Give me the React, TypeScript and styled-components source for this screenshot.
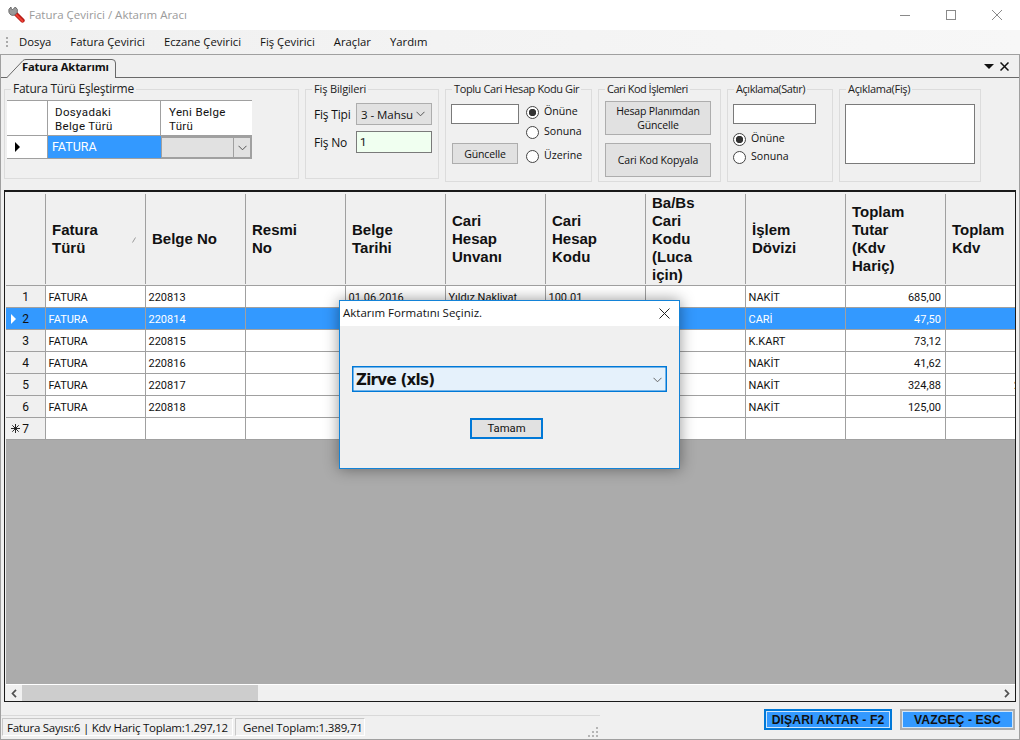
import React from "react";
import styled, { createGlobalStyle } from "styled-components";

const Global = createGlobalStyle`
  html, body { margin: 0; padding: 0; background: #f0f0f0; }
  #root { width: 1020px; height: 740px; overflow: hidden; }
  * { box-sizing: border-box; }
`;

const ui = `"Open Sans", "Liberation Sans", sans-serif`;
const cellFont = `Roboto, "Liberation Sans", sans-serif`;
const heavy = `"Liberation Sans", Arial, sans-serif`;

const Shell = styled.div`
  position: relative;
  width: 1020px;
  height: 740px;
  display: flex;
  flex-direction: column;
  background: #f0f0f0;
  color: #111;
  font: 12px ${ui};
`;

const TitleBar = styled.header`
  height: 30px;
  background: #fff;
  display: flex;
  align-items: center;
  padding-left: 8px;
  gap: 4px;
`;
const TitleText = styled.span`
  color: #9b9b9b;
  font: 11.5px/14px ${ui};
`;
const WindowButtons = styled.div`
  margin-left: auto;
  display: flex;
  height: 30px;
`;
const WindowButton = styled.div`
  width: 46px;
  display: flex;
  align-items: center;
  justify-content: center;
`;

const MenuBar = styled.nav`
  height: 24px;
  background: linear-gradient(90deg, #f0f0f0, #f7f7f7);
  display: flex;
  align-items: center;
  padding-left: 6px;
`;
const Grip = styled.span`
  width: 2px;
  height: 11px;
  margin-right: 11px;
  background: repeating-linear-gradient(180deg, #aaa 0 2px, transparent 2px 4px);
`;
const MenuItem = styled.span`
  margin-right: 19px;
  font: 11.3px/14px ${ui};
  color: #111;
`;

const Frame = styled.div`
  flex: 1;
  min-height: 0;
  border: 1px solid #a0a0a0;
  display: flex;
  flex-direction: column;
`;
const TabStrip = styled.div`
  height: 23px;
  flex: none;
  border-bottom: 1px solid #696969;
  display: flex;
  align-items: flex-end;
  padding-left: 5px;
`;
const Tab = styled.div`
  position: relative;
  width: 110px;
  height: 20px;
  margin-bottom: -1px;
  padding-left: 16px;
  font: bold 11.2px/18px ${ui};
  letter-spacing: -0.15px;
  color: #111;
  svg { position: absolute; left: 0; top: 0; z-index: 0; }
  span { position: relative; z-index: 1; }
`;
const StripIcons = styled.div`
  margin-left: auto;
  display: flex;
  align-items: center;
  gap: 6px;
  padding-right: 10px;
  height: 22px;
`;

const Groups = styled.section`
  display: flex;
  align-items: flex-start;
  gap: 6px;
  padding: 4px 0 0 3px;
  height: 112px;
  flex: none;
`;
const Group = styled.fieldset<{ $w: number; $h: number }>`
  width: ${(p) => p.$w}px;
  height: ${(p) => p.$h}px;
  min-width: 0;
  margin: 0;
  padding: 0;
  border: 1px solid #dcdcdc;
  flex: none;
`;
const Legend = styled.legend<{ $size?: number; $track?: number }>`
  margin-left: 6px;
  padding: 0 2px;
  height: 14px;
  font: ${(p) => p.$size ?? 11}px/14px ${ui};
  letter-spacing: ${(p) => p.$track ?? -0.4}px;
  color: #222;
  white-space: nowrap;
`;

const MiniGrid = styled.div`
  margin: 4px 0 0 2px;
  width: 245px;
  display: grid;
  grid-template-columns: 41px 113px 91px;
  grid-template-rows: 35px 23px;
  background: #fff;
  border-top: 1px solid #a0a0a0;
`;
const MiniHead = styled.div<{ $last?: boolean }>`
  border-right: ${(p) => (p.$last ? "none" : "1px solid #a0a0a0")};
  border-bottom: 1px solid #a0a0a0;
  padding: 4px 0 0 ${(p) => (p.$last ? 8 : 7)}px;
  font: 11.5px/14px ${cellFont};
  letter-spacing: 0.35px;
`;
const MiniRowHead = styled.div`
  display: flex;
  align-items: center;
  padding-left: 8px;
  border-right: 1px solid #a0a0a0;
  border-bottom: 1px solid #a0a0a0;
`;
const MiniValue = styled.div`
  background: #3399ff;
  color: #fff;
  padding-left: 4px;
  border-bottom: 1px solid #a0a0a0;
  font: 12.5px/22px ${cellFont};
`;
const MiniCombo = styled.div`
  background: #e1e1e1;
  border: 2px solid #a0a0a0;
  border-left-width: 1px;
  display: flex;
  justify-content: flex-end;
`;
const MiniArrow = styled.div`
  width: 17px;
  border-left: 1px solid #a0a0a0;
  display: flex;
  align-items: center;
  justify-content: center;
`;

const FisGrid = styled.div`
  display: grid;
  grid-template-columns: 42px 76px;
  grid-auto-rows: 22px;
  row-gap: 6px;
  align-items: center;
  margin: 7px 0 0 8px;
`;
const Label = styled.span`
  font: 12px ${ui};
  letter-spacing: -0.2px;
`;
const SelectBox = styled.div`
  height: 22px;
  background: #e1e1e1;
  border: 1px solid #adadad;
  display: flex;
  align-items: center;
  justify-content: space-between;
  padding: 0 6px 0 4px;
  font: 11.5px ${ui};
  letter-spacing: -0.05px;
`;
const Input = styled.div<{ $w: number; $h: number; $bg?: string }>`
  width: ${(p) => p.$w}px;
  height: ${(p) => p.$h}px;
  background: ${(p) => p.$bg ?? "#fff"};
  border: 1px solid #7a7a7a;
  padding-left: 3px;
  font: 11.5px/20px ${cellFont};
`;
const TopluBody = styled.div`
  display: flex;
  gap: 7px;
  padding: 6px 0 0 5px;
`;
const TopluLeft = styled.div`
  width: 68px;
  padding-top: 2px;
  display: flex;
  flex-direction: column;
  align-items: flex-start;
  gap: 19px;
`;
const Radios = styled.div`
  display: flex;
  flex-direction: column;
`;
const RadioRow = styled.label<{ $h?: number; $mt?: number }>`
  display: flex;
  align-items: center;
  gap: 5px;
  height: ${(p) => p.$h ?? 20}px;
  margin-top: ${(p) => p.$mt ?? 0}px;
  font: 10.6px ${ui};
`;
const RadioText = styled.span`
  margin-bottom: 2px;
`;
const RadioDot = styled.span<{ $on?: boolean }>`
  width: 13px;
  height: 13px;
  border-radius: 50%;
  border: 1px solid #444;
  background: ${(p) => (p.$on ? "radial-gradient(circle, #333 0 3.4px, #fff 4px)" : "#fff")};
  flex: none;
`;
const FlatButton = styled.div<{ $w: number; $h: number; $ml?: number }>`
  width: ${(p) => p.$w}px;
  height: ${(p) => p.$h}px;
  margin-left: ${(p) => p.$ml ?? 0}px;
  background: #e1e1e1;
  border: 1px solid #adadad;
  display: flex;
  align-items: center;
  justify-content: center;
  text-align: center;
  font: 10.5px/14px ${ui};
  letter-spacing: -0.15px;
  color: #111;
`;
const CariBody = styled.div`
  padding: 5px 0 0 6px;
  display: flex;
  flex-direction: column;
  gap: 8px;
`;
const SatirBody = styled.div`
  padding: 8px 0 0 5px;
`;
const SatirRadios = styled(Radios)`
  margin-top: 6px;
`;
const FisBody = styled.div`
  padding: 8px 0 0 5px;
`;

const DataBox = styled.section`
  height: 512px;
  flex: none;
  margin: 0 3px;
  border: 1px solid #1a1a1a;
  border-top-width: 2px;
  display: flex;
  flex-direction: column;
  padding-left: 1px;
  background: #f0f0f0;
  overflow: hidden;
`;
const columns = `40px repeat(10, 100px)`;
const HeadRow = styled.div`
  display: grid;
  grid-template-columns: ${columns};
  height: 94px;
  flex: none;
  width: 1040px;
  border-bottom: 1px solid #a0a0a0;
  padding: 2px 0 1px;
`;
const HeadCell = styled.div`
  position: relative;
  border-right: 1px solid #a0a0a0;
  display: flex;
  align-items: center;
  padding-left: 6px;
  font: bold 15px/18px ${heavy};
  color: #111;
  white-space: pre-line;
`;
const SortMark = styled.svg`
  position: absolute;
  right: 9px;
  top: 43px;
`;
const Row = styled.div<{ $sel?: boolean }>`
  display: grid;
  grid-template-columns: ${columns};
  height: 22px;
  flex: none;
  width: 1040px;
  background: ${(p) => (p.$sel ? "#3399ff" : "#fff")};
  color: ${(p) => (p.$sel ? "#fff" : "#111")};
`;
const RowHead = styled.div<{ $sel?: boolean }>`
  position: relative;
  background: ${(p) => (p.$sel ? "#3399ff" : "#f0f0f0")};
  color: #111;
  border-right: 1px solid #a0a0a0;
  border-bottom: 1px solid #a0a0a0;
  display: flex;
  align-items: center;
  justify-content: center;
  padding-top: 1px;
  font: 12px ${cellFont};
  svg { position: absolute; left: 5px; top: 6px; }
`;
const Cell = styled.div<{ $right?: boolean }>`
  border-right: 1px solid #a0a0a0;
  border-bottom: 1px solid #a0a0a0;
  padding: 0 4px 0 2.5px;
  text-align: ${(p) => (p.$right ? "right" : "left")};
  font: 11px/23px ${cellFont};
  white-space: nowrap;
  overflow: hidden;
`;
const Empty = styled.div`
  flex: 1;
  background: #ababab;
  border-bottom: 1px solid #fff;
`;
const ScrollBar = styled.div`
  height: 16px;
  flex: none;
  display: flex;
  align-items: center;
  background: #f0f0f0;
`;
const ScrollButton = styled.div`
  width: 16px;
  height: 16px;
  flex: none;
  display: flex;
  align-items: center;
  justify-content: center;
`;
const ScrollTrack = styled.div`
  flex: 1;
  height: 16px;
`;
const ScrollThumb = styled.div`
  width: 236px;
  height: 16px;
  background: #cdcdcd;
`;

const Footer = styled.footer`
  flex: 1;
  display: flex;
  justify-content: space-between;
  min-height: 0;
`;
const StatusBar = styled.div`
  width: 599px;
  align-self: flex-end;
  height: 24px;
  position: relative;
  border-top: 1px solid #d9d9d9;
  display: flex;
  align-items: flex-start;
  gap: 2px;
  padding: 2px 0 0 1px;
`;
const StatusCell = styled.div<{ $w: number; $pl: number; $track: number }>`
  width: ${(p) => p.$w}px;
  height: 18px;
  padding-left: ${(p) => p.$pl}px;
  border: 1px solid;
  border-color: #c8c8c8 #fff #fff #c8c8c8;
  font: 11.5px/18px ${ui};
  letter-spacing: ${(p) => p.$track}px;
  color: #111;
  white-space: nowrap;
`;
const ResizeGrip = styled.svg`
  position: absolute;
  right: 1px;
  bottom: 2px;
`;
const Actions = styled.div`
  display: flex;
  align-items: flex-start;
  gap: 8px;
  padding: 7px 4px 0 0;
`;
const ActionButton = styled.div<{ $w: number; $primary?: boolean }>`
  width: ${(p) => p.$w}px;
  height: 21px;
  background: #3399ff;
  border: 2px solid ${(p) => (p.$primary ? "#0078d7" : "#adadad")};
  outline: 1px solid #cfe6fb;
  outline-offset: -3px;
  display: flex;
  align-items: center;
  justify-content: center;
  font: bold 12.2px ${heavy};
  letter-spacing: 0.1px;
  color: #111;
`;

const Dialog = styled.div`
  position: absolute;
  left: 339px;
  top: 300px;
  width: 341px;
  height: 169px;
  border: 1px solid #1383d8;
  background: #f0f0f0;
  box-shadow: 0 0 14px rgba(0, 0, 0, 0.42);
  display: flex;
  flex-direction: column;
`;
const DialogTitle = styled.div`
  height: 25px;
  flex: none;
  background: #fff;
  padding: 0 0 2px 3px;
  display: flex;
  align-items: center;
  justify-content: space-between;
  font: 11.5px ${ui};
  color: #111;
`;
const DialogClose = styled.div`
  width: 30px;
  display: flex;
  justify-content: center;
  padding-top: 2px;
`;
const DialogCombo = styled.div`
  margin: 40px 0 0 12px;
  width: 315px;
  height: 26px;
  border: 1px solid #0078d7;
  box-shadow: inset 0 0 0 0.5px #0078d7;
  background: #e5f1fb;
  display: flex;
  align-items: center;
  justify-content: space-between;
  padding: 1px 4px 0 3px;
  font: bold 15px "DejaVu Sans", sans-serif;
  letter-spacing: -0.7px;
  color: #111;
`;
const DialogButton = styled.div`
  margin: 26px 0 0 130px;
  width: 73px;
  height: 21px;
  background: #e1e1e1;
  border: 2px solid #0078d7;
  display: flex;
  align-items: center;
  justify-content: center;
  font: 11.3px ${cellFont};
  color: #111;
`;

const Chevron = ({ w = 9, c = "#555" }: { w?: number; c?: string }) => (
  <svg width={w} height="6" viewBox="0 0 9 6" fill="none">
    <path d="M0.5 0.8 L4.5 4.8 L8.5 0.8" stroke={c} strokeWidth="1" />
  </svg>
);

const WrenchIcon = () => (
  <svg width="17" height="18" viewBox="0 0 17 18">
    <path d="M7 7 L14.5 14.5" stroke="#b51a16" strokeWidth="4.4" strokeLinecap="round" />
    <path d="M7.5 8 L14.5 15" stroke="#ee4034" strokeWidth="2" strokeLinecap="round" />
    <path
      d="M3 1 A4.6 4.6 0 0 0 1 6.5 A4.6 4.6 0 0 0 6.8 9 L9.2 6.6 A4.6 4.6 0 0 0 7.2 1 L4.8 3.6 L3.4 3.2 Z"
      fill="#9a9a9a"
      stroke="#5d5d5d"
      strokeWidth="0.8"
    />
  </svg>
);

const Radio = ({ on, label, h, mt }: { on?: boolean; label: string; h?: number; mt?: number }) => (
  <RadioRow $h={h} $mt={mt}>
    <RadioDot $on={on} />
    <RadioText>{label}</RadioText>
  </RadioRow>
);

const headers = [
  "Fatura\nTürü",
  "Belge No",
  "Resmi\nNo",
  "Belge\nTarihi",
  "Cari\nHesap\nUnvanı",
  "Cari\nHesap\nKodu",
  "Ba/Bs\nCari\nKodu\n(Luca\niçin)",
  "İşlem\nDövizi",
  "Toplam\nTutar\n(Kdv\nHariç)",
  "Toplam\nKdv",
];

type RowData = { no: string; belge: string; tarih?: string; unvan?: string; kod?: string; doviz: string; tutar: string; kdv?: string };
const rows: RowData[] = [
  { no: "1", belge: "220813", tarih: "01.06.2016", unvan: "Yıldız Nakliyat", kod: "100.01", doviz: "NAKİT", tutar: "685,00" },
  { no: "2", belge: "220814", doviz: "CARİ", tutar: "47,50" },
  { no: "3", belge: "220815", doviz: "K.KART", tutar: "73,12" },
  { no: "4", belge: "220816", doviz: "NAKİT", tutar: "41,62" },
  { no: "5", belge: "220817", doviz: "NAKİT", tutar: "324,88", kdv: "25,99" },
  { no: "6", belge: "220818", doviz: "NAKİT", tutar: "125,00" },
];

export default function App() {
  return (
    <Shell>
      <Global />
      <TitleBar>
        <WrenchIcon />
        <TitleText>Fatura Çevirici / Aktarım Aracı</TitleText>
        <WindowButtons>
          <WindowButton>
            <svg width="10" height="10" viewBox="0 0 10 10"><path d="M0 5.5H10" stroke="#8a8a8a" /></svg>
          </WindowButton>
          <WindowButton>
            <svg width="10" height="10" viewBox="0 0 10 10"><rect x="0.5" y="0.5" width="9" height="9" fill="none" stroke="#8a8a8a" /></svg>
          </WindowButton>
          <WindowButton>
            <svg width="10" height="10" viewBox="0 0 10 10"><path d="M0 0L10 10M10 0L0 10" stroke="#8a8a8a" /></svg>
          </WindowButton>
        </WindowButtons>
      </TitleBar>

      <MenuBar>
        <Grip />
        {["Dosya", "Fatura Çevirici", "Eczane Çevirici", "Fiş Çevirici", "Araçlar", "Yardım"].map((m) => (
          <MenuItem key={m}>{m}</MenuItem>
        ))}
      </MenuBar>

      <Frame>
        <TabStrip>
          <Tab>
            <svg width="110" height="20" viewBox="0 0 110 20">
              <path d="M0.5 20 L17 2.5 Q18 1.5 20 1.5 L106 1.5 Q109.5 1.5 109.5 5 L109.5 20" fill="#f0f0f0" stroke="#696969" />
            </svg>
            <span>Fatura Aktarımı</span>
          </Tab>
          <StripIcons>
            <svg width="10" height="5" viewBox="0 0 10 5"><path d="M0 0H10L5 5Z" fill="#111" /></svg>
            <svg width="9" height="9" viewBox="0 0 9 9"><path d="M0.5 0.5L8.5 8.5M8.5 0.5L0.5 8.5" stroke="#111" strokeWidth="1.5" /></svg>
          </StripIcons>
        </TabStrip>

        <Groups>
          <Group $w={295} $h={97}>
            <Legend $size={12} $track={-0.25}>Fatura Türü Eşleştirme</Legend>
            <MiniGrid>
              <MiniHead />
              <MiniHead>Dosyadaki<br />Belge Türü</MiniHead>
              <MiniHead $last>Yeni Belge<br />Türü</MiniHead>
              <MiniRowHead>
                <svg width="5" height="10" viewBox="0 0 5 10"><path d="M0 0L5 5L0 10Z" fill="#000" /></svg>
              </MiniRowHead>
              <MiniValue>FATURA</MiniValue>
              <MiniCombo>
                <MiniArrow><Chevron /></MiniArrow>
              </MiniCombo>
            </MiniGrid>
          </Group>

          <Group $w={134} $h={97}>
            <Legend $track={-0.15}>Fiş Bilgileri</Legend>
            <FisGrid>
              <Label>Fiş Tipi</Label>
              <SelectBox>3 - Mahsu <Chevron /></SelectBox>
              <Label>Fiş No</Label>
              <Input $w={76} $h={22} $bg="#f0fff0">1</Input>
            </FisGrid>
          </Group>

          <Group $w={147} $h={100}>
            <Legend>Toplu Cari Hesap Kodu Gir</Legend>
            <TopluBody>
              <TopluLeft>
                <Input $w={68} $h={20} />
                <FlatButton $w={66} $h={21} $ml={1}>Güncelle</FlatButton>
              </TopluLeft>
              <Radios>
                <Radio on label="Önüne" />
                <Radio label="Sonuna" />
                <Radio label="Üzerine" mt={4} />
              </Radios>
            </TopluBody>
          </Group>

          <Group $w={123} $h={100}>
            <Legend $track={-0.5}>Cari Kod İşlemleri</Legend>
            <CariBody>
              <FlatButton $w={106} $h={34}>Hesap Planımdan<br />Güncelle</FlatButton>
              <FlatButton $w={106} $h={34}>Cari Kod Kopyala</FlatButton>
            </CariBody>
          </Group>

          <Group $w={106} $h={100}>
            <Legend $track={-0.45}>Açıklama(Satır)</Legend>
            <SatirBody>
              <Input $w={83} $h={20} />
              <SatirRadios>
                <Radio on label="Önüne" h={18} />
                <Radio label="Sonuna" h={18} />
              </SatirRadios>
            </SatirBody>
          </Group>

          <Group $w={142} $h={100}>
            <Legend $track={-0.3}>Açıklama(Fiş)</Legend>
            <FisBody>
              <Input $w={130} $h={60} />
            </FisBody>
          </Group>
        </Groups>

        <DataBox>
          <HeadRow>
            <HeadCell />
            {headers.map((h, i) => (
              <HeadCell key={h}>
                {h}
                {i === 0 && (
                  <SortMark width="4" height="6" viewBox="0 0 4 6">
                    <path d="M3.5 0.5L0.5 5.5" stroke="#9a9a9a" />
                  </SortMark>
                )}
              </HeadCell>
            ))}
          </HeadRow>
          {rows.map((r) => {
            const sel = r.no === "2";
            return (
              <Row key={r.no} $sel={sel}>
                <RowHead $sel={sel}>
                  {sel && (
                    <svg width="5" height="10" viewBox="0 0 5 10"><path d="M0 0L5 5L0 10Z" fill="#fff" /></svg>
                  )}
                  {r.no}
                </RowHead>
                <Cell>FATURA</Cell>
                <Cell>{r.belge}</Cell>
                <Cell />
                <Cell>{r.tarih}</Cell>
                <Cell>{r.unvan}</Cell>
                <Cell>{r.kod}</Cell>
                <Cell />
                <Cell>{r.doviz}</Cell>
                <Cell $right>{r.tutar}</Cell>
                <Cell $right>{r.kdv}</Cell>
              </Row>
            );
          })}
          <Row>
            <RowHead>
              <svg width="9" height="9" viewBox="0 0 9 9">
                <path d="M4.5 0V9M0 4.5H9M1.3 1.3L7.7 7.7M7.7 1.3L1.3 7.7" stroke="#111" strokeWidth="0.9" />
              </svg>
              7
            </RowHead>
            {Array.from({ length: 10 }, (_, i) => (
              <Cell key={i} />
            ))}
          </Row>
          <Empty />
          <ScrollBar>
            <ScrollButton>
              <svg width="6" height="9" viewBox="0 0 6 9"><path d="M5 0.8L1.5 4.5L5 8.2" fill="none" stroke="#505050" strokeWidth="1.7" /></svg>
            </ScrollButton>
            <ScrollTrack><ScrollThumb /></ScrollTrack>
            <ScrollButton>
              <svg width="6" height="9" viewBox="0 0 6 9"><path d="M1 0.8L4.5 4.5L1 8.2" fill="none" stroke="#505050" strokeWidth="1.7" /></svg>
            </ScrollButton>
          </ScrollBar>
        </DataBox>

        <Footer>
          <StatusBar>
            <StatusCell $w={231} $pl={4} $track={-0.25}>Fatura Sayısı:6 | Kdv Hariç Toplam:1.297,12</StatusCell>
            <StatusCell $w={130} $pl={7} $track={-0.15}>Genel Toplam:1.389,71</StatusCell>
            <ResizeGrip width="11" height="11" viewBox="0 0 11 11">
              <path d="M8 1h2v2H8zM4 5h2v2H4zM8 5h2v2H8zM0 9h2v2H0zM4 9h2v2H4zM8 9h2v2H8z" fill="#b5b5b5" />
            </ResizeGrip>
          </StatusBar>
          <Actions>
            <ActionButton $w={128} $primary>DIŞARI AKTAR - F2</ActionButton>
            <ActionButton $w={115}>VAZGEÇ - ESC</ActionButton>
          </Actions>
        </Footer>
      </Frame>

      <Dialog>
        <DialogTitle>
          Aktarım Formatını Seçiniz.
          <DialogClose>
            <svg width="11" height="11" viewBox="0 0 11 11"><path d="M0.5 0.5L10.5 10.5M10.5 0.5L0.5 10.5" stroke="#222" /></svg>
          </DialogClose>
        </DialogTitle>
        <DialogCombo>
          Zirve (xls)
          <Chevron c="#666" />
        </DialogCombo>
        <DialogButton>Tamam</DialogButton>
      </Dialog>
    </Shell>
  );
}
